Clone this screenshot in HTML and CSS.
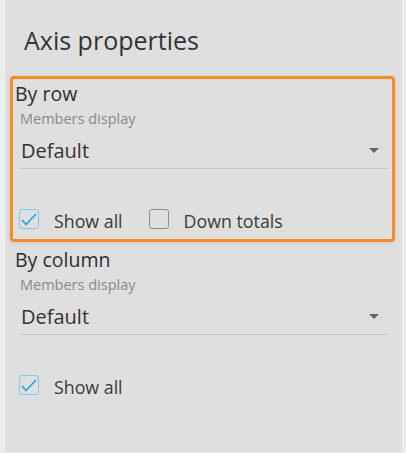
FILE: index.html
```html
<!DOCTYPE html>
<html>
<head>
<meta charset="utf-8">
<link rel="stylesheet" href="styles.css">
</head>
<body>
<div class="panel">
  <div class="title">Axis properties</div>

  <div class="section highlight">
    <div class="heading">By row</div>
    <div class="label">Members display</div>
    <div class="select"><span class="value">Default</span><span class="arrow"></span></div>
    <div class="checks">
      <div class="option">
        <span class="box checked"><svg viewBox="0 0 20 20" width="20" height="20"><path d="M3 11 L7 15.5 L17 5" fill="none" stroke="#29a6df" stroke-width="1.8"/></svg></span>
        <span class="text">Show all</span>
      </div>
      <div class="option">
        <span class="box"></span>
        <span class="text">Down totals</span>
      </div>
    </div>
  </div>

  <div class="section">
    <div class="heading">By column</div>
    <div class="label">Members display</div>
    <div class="select"><span class="value">Default</span><span class="arrow"></span></div>
    <div class="checks">
      <div class="option">
        <span class="box checked"><svg viewBox="0 0 20 20" width="20" height="20"><path d="M3 11 L7 15.5 L17 5" fill="none" stroke="#29a6df" stroke-width="1.8"/></svg></span>
        <span class="text">Show all</span>
      </div>
    </div>
  </div>
</div>
</body>
</html>
```

FILE: styles.css
```css
html, body {
  margin: 0;
  padding: 0;
}
body {
  background: #ededed;
  font-family: "Open Sans", "Liberation Sans", sans-serif;
  color: #333;
}
.panel {
  margin-left: 5px;
  width: 397px;
  height: 452px;
  box-sizing: border-box;
  padding: 24px 7px 0 5px;
  background: #dfdfdf;
}
.title {
  font-size: 25px;
  line-height: 32px;
  margin-left: 14px;
  color: #333;
}
.section {
  border: 3px solid transparent;
  border-radius: 4px;
  padding: 0 4px 6px 2px;
}
.highlight {
  margin-top: 20px;
  border-color: #f58d24;
  box-shadow: 0 1px 4px rgba(0, 0, 0, 0.12);
}
.heading {
  margin-top: 3px;
  font-size: 19.5px;
  line-height: 24px;
  color: #2e2e2e;
}
.label {
  margin: 4px 0 0 5px;
  font-size: 14.5px;
  line-height: 18px;
  color: #8a8a8a;
}
.select {
  margin: 9px 0 0 5px;
  padding: 0 9px 3px 1px;
  display: flex;
  align-items: center;
  justify-content: space-between;
  border-bottom: 1px solid #c6c6c6;
}
.value {
  font-size: 20px;
  line-height: 28px;
  color: #333;
}
.arrow {
  width: 0;
  height: 0;
  border-left: 5px solid transparent;
  border-right: 5px solid transparent;
  border-top: 5px solid #666;
  margin-top: -1px;
}
.checks {
  margin: 40px 0 0 4px;
  display: flex;
  gap: 26px;
}
.option {
  display: flex;
  align-items: flex-start;
  gap: 15px;
}
.box {
  width: 20px;
  height: 20px;
  box-sizing: border-box;
  border: 1.5px solid #8c8c8c;
  border-radius: 3px;
  position: relative;
}
.box.checked {
  border-color: #7ccbef;
}
.box svg {
  position: absolute;
  left: -1.5px;
  top: -1.5px;
}
.text {
  font-size: 17.8px;
  line-height: 24px;
  color: #3a3a3a;
}
```
